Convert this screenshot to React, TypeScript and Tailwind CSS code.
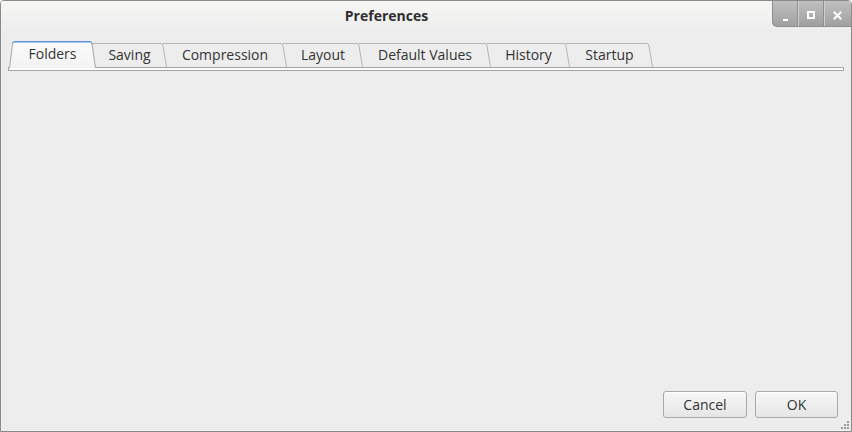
import React from "react";

type TabDef = { label: string; w: string; width: number };

const tabs: TabDef[] = [
  { label: "Saving", w: "w-[71px]", width: 71 },
  { label: "Compression", w: "w-[120px]", width: 120 },
  { label: "Layout", w: "w-[76px]", width: 76 },
  { label: "Default Values", w: "w-[128px]", width: 128 },
  { label: "History", w: "w-[79px]", width: 79 },
  { label: "Startup", w: "w-[83px]", width: 83 },
];

function SelectedTab() {
  const w = 87;
  const h = 26;
  return (
    <div className="relative z-10 w-[87px] h-[26px] flex items-center justify-center pb-[2px] text-[#333333]">
      <svg
        className="absolute inset-0 overflow-visible"
        width={w}
        height={h + 1}
        viewBox={`0 0 ${w} ${h + 1}`}
      >
        <defs>
          <linearGradient id="selg" x1="0" y1="0" x2="0" y2="1">
            <stop offset="0" stopColor="#fbfbfb" />
            <stop offset="1" stopColor="#f3f3f3" />
          </linearGradient>
        </defs>
        <path
          d={`M0.5,${h + 1} L3.5,3 Q3.8,0.5 6,0.5 L${w - 6},0.5 Q${w - 4.3},0.5 ${w - 4},3 L${w - 0.5},${h + 1} Z`}
          fill="url(#selg)"
          stroke="none"
        />
        <path
          d={`M0.5,${h + 1} L3.5,3 Q3.8,0.5 6,0.5 L${w - 6},0.5 Q${w - 4.3},0.5 ${w - 4},3 L${w - 0.5},${h + 1}`}
          fill="none"
          stroke="#a6a6a6"
        />
        <path
          d={`M3.6,2.5 Q3.9,0.5 6,0.5 L${w - 6},0.5 Q${w - 4.3},0.5 ${w - 4.1},2.5`}
          fill="none"
          stroke="#5f95d6"
        />
        <path d={`M5,1.5 L${w - 5},1.5`} stroke="#a9c8ee" />
      </svg>
      <span className="relative">Folders</span>
    </div>
  );
}

function Tab({ t }: { t: TabDef }) {
  const w = t.width;
  const h = 24;
  return (
    <div className={`relative ${t.w} h-[24px] flex items-center justify-center pr-1 pb-[1px] text-[#333333]`}>
      <svg
        className="absolute left-0 top-0 overflow-visible"
        width={w}
        height={h}
        viewBox={`0 0 ${w} ${h}`}
      >
        <path
          d={`M-4,0.5 L${w - 6},0.5 Q${w - 4.3},0.5 ${w - 4},3 L${w - 0.5},${h}`}
          fill="none"
          stroke="#b4b4b4"
        />
      </svg>
      <span className="relative">{t.label}</span>
    </div>
  );
}

function WinButtons() {
  return (
    <div className="flex h-[26px] w-[79px] rounded-bl-[5px] overflow-hidden border-l border-b border-[#8e8e8e] bg-gradient-to-b from-[#c0c0c0] to-[#a0a0a0]">
      <div className="w-[25px] h-full flex items-center justify-center border-r border-[#8f8f8f] shadow-[1px_0_0_#cfcfcf]">
        <svg width="8" height="8" viewBox="0 0 8 8" className="mt-[8px] ml-[2px]">
          <rect x="1" y="5" width="5" height="2" fill="#ffffff" />
        </svg>
      </div>
      <div className="w-[26px] h-full flex items-center justify-center border-r border-[#8f8f8f] shadow-[1px_0_0_#cfcfcf]">
        <svg width="8" height="8" viewBox="0 0 8 8" className="mt-[3px]">
          <rect x="1" y="1" width="6" height="6" fill="none" stroke="#ffffff" strokeWidth="2" />
        </svg>
      </div>
      <div className="flex-1 h-full flex items-center justify-center">
        <svg width="9" height="9" viewBox="0 0 9 9" className="mt-[3px]">
          <path d="M1.5,1.5 L7.5,7.5 M7.5,1.5 L1.5,7.5" stroke="#ffffff" strokeWidth="2" strokeLinecap="square" />
        </svg>
      </div>
    </div>
  );
}

function Btn({ label, w }: { label: string; w: string }) {
  return (
    <button
      className={`${w} h-[27px] rounded-[3px] border border-[#a9a9a9] bg-gradient-to-b from-[#f7f7f7] to-[#e6e6e6] text-[#333333] text-[14px] shadow-[inset_0_1px_0_#ffffff] flex items-center justify-center pb-[1px]`}
    >
      {label}
    </button>
  );
}

export default function App() {
  return (
    <div
      className="relative w-[852px] h-[432px] flex flex-col bg-[#ededed] border border-[#8a8a8a] rounded-t-[4px] overflow-hidden text-[14px]"
      style={{ fontFamily: '"Open Sans", "Noto Sans", "DejaVu Sans", sans-serif' }}
    >
      <div className="flex items-start h-[31px] bg-gradient-to-b from-[#f6f6f4] to-[#ededed]">
        <div className="flex-1 h-[31px] flex items-center justify-center font-bold text-[#2e2e2e] pb-[2px]">
          Preferences
        </div>
        <WinButtons />
      </div>
      <div className="flex items-end pt-[9px] pl-[8px]">
        <SelectedTab />
        {tabs.map((t) => (
          <Tab key={t.label} t={t} />
        ))}
      </div>
      <div className="mx-[7px] h-[4px] border border-[#a6a6a6] bg-[#fbfbfb]" />
      <div className="flex-1" />
      <div className="flex justify-end gap-[8px] pr-[13px] pb-[13px]">
        <Btn label="Cancel" w="w-[84px]" />
        <Btn label="OK" w="w-[83px]" />
      </div>
      <svg
        className="absolute right-[1px] bottom-[1px]"
        width="11"
        height="11"
        viewBox="0 0 11 11"
      >
        <g fill="#9a9a9a">
          <rect x="8" y="2" width="2" height="2" />
          <rect x="5" y="5" width="2" height="2" />
          <rect x="8" y="5" width="2" height="2" />
          <rect x="2" y="8" width="2" height="2" />
          <rect x="5" y="8" width="2" height="2" />
          <rect x="8" y="8" width="2" height="2" />
        </g>
      </svg>
    </div>
  );
}
